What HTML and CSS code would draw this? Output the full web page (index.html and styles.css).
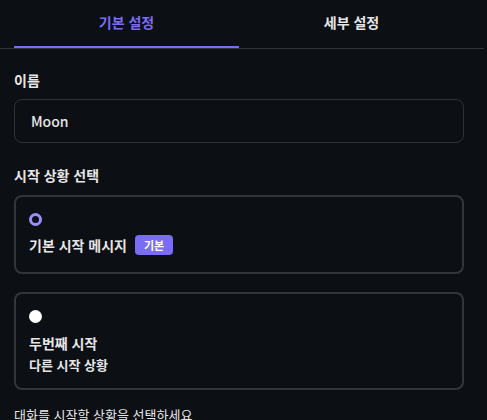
FILE: index.html
```html
<!DOCTYPE html>
<html lang="ko">
<head>
    <meta charset="UTF-8">
    <meta name="viewport" content="width=device-width, initial-scale=1.0">
    <title>캐릭터 설정</title>
    <link rel="stylesheet" href="styles.css">
</head>
<body>
    <div class="tabs">
        <div class="tab active">기본 설정</div>
        <div class="tab">세부 설정</div>
    </div>

    <div class="content">
        <label class="field-label" for="name">이름</label>
        <div class="input">Moon</div>

        <div class="field-label section">시작 상황 선택</div>

        <div class="option checked">
            <span class="radio"></span>
            <div class="option-title">기본 시작 메시지 <span class="badge">기본</span></div>
        </div>

        <div class="option">
            <span class="radio"></span>
            <div class="option-title">두번째 시작</div>
            <div class="option-desc">다른 시작 상황</div>
        </div>

        <p class="hint">대화를 시작할 상황을 선택하세요</p>
    </div>
</body>
</html>
```

FILE: styles.css
```css
* { margin: 0; padding: 0; box-sizing: border-box; }
body {
    font-family: "Noto Sans CJK KR", "Noto Sans", sans-serif;
    background: #0c0f14;
    color: #e6e6e6;
    overflow: hidden;
}
.tabs {
    display: flex;
    margin-right: 3px;
    padding: 0 20px 0 14px;
    border-bottom: 1px solid #333538;
}
.tab {
    flex: 1;
    text-align: center;
    font-size: 14px;
    font-weight: bold;
    line-height: 20px;
    padding: 12px 0 14px;
    border-bottom: 2px solid transparent;
    color: #e6e6e6;
}
.tab.active {
    color: #7b6cf6;
    border-bottom-color: #7b6cf6;
}
.content {
    padding: 21px 23px 0 14px;
}
.field-label {
    display: block;
    font-size: 14px;
    font-weight: bold;
    line-height: 20px;
    margin-bottom: 9px;
}
.field-label.section {
    margin-top: 22px;
    margin-bottom: 10px;
}
.input {
    height: 44px;
    border: 1px solid #303236;
    border-radius: 8px;
    padding: 0 16px;
    font-size: 14px;
    font-weight: 500;
    line-height: 42px;
    color: #e6e6e6;
}
.option {
    border: 2px solid #333538;
    border-radius: 8px;
    padding: 16px 13px 17px;
    margin-bottom: 18px;
}
.option + .option {
    padding-bottom: 13px;
    margin-bottom: 0;
}
.radio {
    display: block;
    width: 13px;
    height: 13px;
    border-radius: 50%;
    background: #ffffff;
    margin-bottom: 9px;
}
.option.checked .radio {
    background: #0c0f14;
    border: 3px solid #9d8ffb;
}
.option + .option .radio {
    margin-bottom: 10px;
}
.option-title {
    display: flex;
    align-items: center;
    gap: 8px;
    font-size: 14px;
    font-weight: bold;
    line-height: 20px;
}
.option-desc {
    font-size: 13px;
    font-weight: bold;
    line-height: 20px;
    margin-top: 2px;
}
.badge {
    display: inline-block;
    background: #7b6cf6;
    color: #ffffff;
    font-size: 11px;
    font-weight: bold;
    line-height: 20px;
    padding: 0 9px;
    border-radius: 4px;
}
.hint {
    font-size: 13px;
    line-height: 20px;
    margin-top: 15px;
    color: #e6e6e6;
}
```
